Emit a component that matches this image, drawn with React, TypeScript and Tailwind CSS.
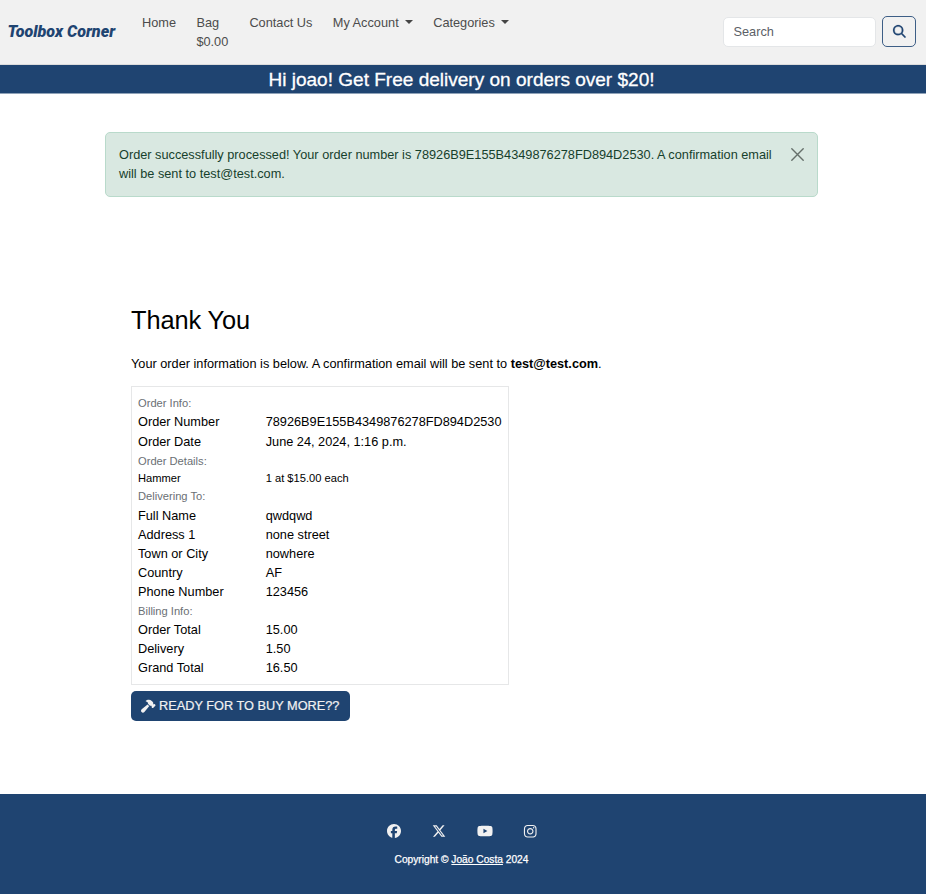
import React from "react";
import {
  FaFacebook,
  FaHammer,
  FaInstagram,
  FaMagnifyingGlass,
  FaXTwitter,
  FaYoutube,
} from "react-icons/fa6";

function Caret() {
  return (
    <svg viewBox="0 0 8 4" className="ml-[6.5px] mt-[7px] h-[4px] w-[8px]" fill="#454545">
      <path d="M0 0h8L4 4z" />
    </svg>
  );
}

function Navbar() {
  return (
    <nav className="flex h-[65px] items-start border-b border-[#dcdcdc] bg-[#f1f1f1] text-[12.75px] leading-[19px] text-[#4c4c4c]">
      <a className="ml-[7.5px] mt-[20px] w-[134.5px] whitespace-nowrap font-['Roboto'] text-[16.1px] font-black italic leading-[24px] text-[#1f4471]">
        Toolbox Corner
      </a>
      <ul className="mt-[13px] flex whitespace-nowrap">
        <li className="w-[54.4px]">Home</li>
        <li className="w-[53px]">
          Bag
          <br />
          $0.00
        </li>
        <li className="w-[83.4px]">Contact Us</li>
        <li className="flex w-[100.4px]">
          My Account
          <Caret />
        </li>
        <li className="flex">
          Categories
          <Caret />
        </li>
      </ul>
      <form className="ml-auto mr-[10px] mt-4 flex gap-[6px]">
        <input
          placeholder="Search"
          className="mt-px h-[30px] w-[153px] rounded-[5px] border border-[#e4e6e8] bg-white px-[9.5px] pb-[1.5px] text-[12.75px] placeholder:text-[#5b6066]"
        />
        <button
          type="button"
          className="flex h-[31px] w-[34px] items-center justify-center rounded-[5px] border border-[#3d5e86] text-[#1f4471]"
        >
          <FaMagnifyingGlass size={12.75} strokeWidth={8} stroke="currentColor" className="overflow-visible" />
        </button>
      </form>
    </nav>
  );
}

function Alert() {
  return (
    <div className="ml-[105px] mt-[38px] flex h-[65px] w-[713px] justify-between rounded-[5px] border border-[#b9dacb] bg-[#d9e8e1] pl-[13px] pr-[13px] pt-[12px] text-[12.74px] leading-[19px] text-[#16402c]">
      <p className="whitespace-nowrap">
        Order successfully processed! Your order number is 78926B9E155B4349876278FD894D2530. A confirmation email
        <br />
        will be sent to test@test.com.
      </p>
      <svg viewBox="0 0 13 13" className="mt-[3px] h-[13px] w-[13px] text-[#66706b]" fill="none" stroke="currentColor" strokeWidth="1.4" strokeLinecap="round">
        <path d="M.8.8 12.2 12.2M12.2.8.8 12.2" />
      </svg>
    </div>
  );
}

function Heading({ children }: { children: React.ReactNode }) {
  return <div className="h-[19px] text-[11.15px] leading-[20px] text-[#6a6f74]">{children}</div>;
}

function Row({ label, value }: { label: string; value: string }) {
  return (
    <div className="flex h-[19.05px] leading-[19px]">
      <div className="w-[127.7px]">{label}</div>
      <div>{value}</div>
    </div>
  );
}

function OrderSummary() {
  return (
    <section className="ml-[131px] mt-[104px] text-[12.74px] text-black">
      <h2 className="text-[25.4px] leading-[38px] tracking-[-0.1px]">Thank You</h2>
      <p className="mt-[15px] whitespace-nowrap leading-[19px]">
        Your order information is below. A confirmation email will be sent to <strong>test@test.com</strong>.
      </p>
      <div className="mt-[13px] h-[299px] w-[378.4px] whitespace-nowrap border border-[#e6e7e8] pl-[6px] pt-[6px]">
        <Heading>Order Info:</Heading>
        <Row label="Order Number" value="78926B9E155B4349876278FD894D2530" />
        <div className="pt-[0.7px]">
          <Row label="Order Date" value="June 24, 2024, 1:16 p.m." />
        </div>
        <Heading>Order Details:</Heading>
        <div className="flex h-[17px] text-[11.15px] leading-[17px]">
          <div className="w-[127.7px]">Hammer</div>
          <div>1 at $15.00 each</div>
        </div>
        <div className="h-[19px] text-[11.15px] leading-[19px] text-[#6a6f74]">Delivering To:</div>
        <Row label="Full Name" value="qwdqwd" />
        <Row label="Address 1" value="none street" />
        <Row label="Town or City" value="nowhere" />
        <Row label="Country" value="AF" />
        <Row label="Phone Number" value="123456" />
        <Heading>Billing Info:</Heading>
        <Row label="Order Total" value="15.00" />
        <Row label="Delivery" value="1.50" />
        <Row label="Grand Total" value="16.50" />
      </div>
      <button
        type="button"
        className="mt-[6px] flex h-[30px] w-[219px] items-center whitespace-nowrap rounded-[5px] bg-[#1f4471] pl-[10px] text-[12.75px] text-[#f1f1f1] [-webkit-text-stroke:0.2px]"
      >
        <FaHammer size={14.5} className="mr-[3.5px]" />
        READY FOR TO BUY MORE??
      </button>
    </section>
  );
}

function Footer() {
  return (
    <footer className="mt-[73px] h-[100px] bg-[#1f4471] pt-[30px] text-[#f1f1f1]">
      <div className="flex h-[14px] items-center pl-[386.5px]">
        <FaFacebook size={14} />
        <FaXTwitter size={14} className="ml-[31.5px]" />
        <FaYoutube size={16} className="ml-[30.5px]" />
        <FaInstagram size={14.5} className="ml-[30.5px]" />
      </div>
      <p className="mt-[14px] pr-[3px] text-center text-[10.2px] leading-[15px] text-white [-webkit-text-stroke:0.25px]">
        Copyright © <a className="underline">João Costa</a> 2024
      </p>
    </footer>
  );
}

export default function App() {
  return (
    <div className="h-[894px] w-[926px] overflow-hidden bg-white font-['Liberation_Sans',Arial,sans-serif]">
      <Navbar />
      <div className="h-[29px] border-b border-[#8fa2b8] bg-[#1f4471] pr-[3px] text-center text-[19.05px] leading-[29px] text-white [-webkit-text-stroke:0.3px]">
        Hi joao! Get Free delivery on orders over $20!
      </div>
      <Alert />
      <OrderSummary />
      <Footer />
    </div>
  );
}
